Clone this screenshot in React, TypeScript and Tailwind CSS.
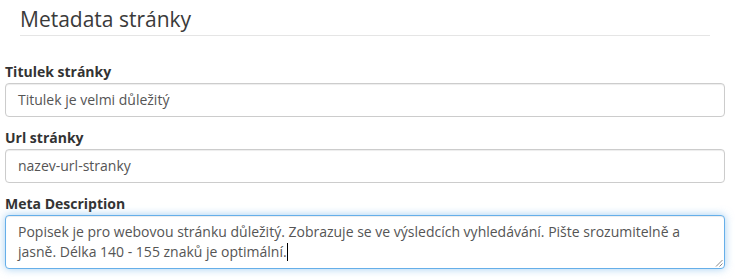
import React from "react";

const font = { fontFamily: '"Open Sans", "Noto Sans", sans-serif' };

function Label({ children }: { children: React.ReactNode }) {
  return (
    <label className="block text-[14px] font-bold leading-[20px] text-[#333] mb-[1px]">
      {children}
    </label>
  );
}

function Input({ value }: { value: string }) {
  return (
    <div className="h-[34px] w-[720px] rounded-[4px] border border-[#ccc] bg-white px-[12px] py-[6px] text-[14px] leading-[20px] text-[#555] shadow-[inset_0_1px_1px_rgba(0,0,0,0.075)]">
      {value}
    </div>
  );
}

export default function App() {
  return (
    <div className="w-[744px] h-[279px] bg-white overflow-hidden" style={font}>
      <div className="ml-[20px] w-[690px] pt-[7px] pb-[4px] border-b border-[#e5e5e5]">
        <h3 className="text-[21px] leading-[24px] font-normal text-[#3a3a3a]">Metadata stránky</h3>
      </div>
      <div className="ml-[5px] mt-[26px] flex flex-col">
        <Label>Titulek stránky</Label>
        <Input value="Titulek je velmi důležitý" />
        <div className="h-[11px]" />
        <Label>Url stránky</Label>
        <Input value="nazev-url-stranky" />
        <div className="h-[11px]" />
        <Label>Meta Description</Label>
        <div className="relative h-[54px] w-[720px] rounded-[4px] border border-[#66afe9] bg-white px-[12px] py-[6px] text-[14px] leading-[20px] text-[#555] shadow-[inset_0_1px_1px_rgba(0,0,0,0.075),0_0_8px_rgba(102,175,233,0.6)]">
          Popisek je pro webovou stránku důležitý. Zobrazuje se ve výsledcích vyhledávání. Pište srozumitelně a
          <br />
          jasně. Délka 140 - 155 znaků je optimální.
          <span className="inline-block w-[1px] h-[18px] bg-black align-[-4px]" />
          <svg className="absolute right-[1px] bottom-[1px]" width="8" height="8" viewBox="0 0 8 8">
            <line x1="1" y1="7.5" x2="7.5" y2="1" stroke="#888" strokeWidth="1" />
            <line x1="4.5" y1="7.5" x2="7.5" y2="4.5" stroke="#888" strokeWidth="1" />
          </svg>
        </div>
      </div>
    </div>
  );
}
